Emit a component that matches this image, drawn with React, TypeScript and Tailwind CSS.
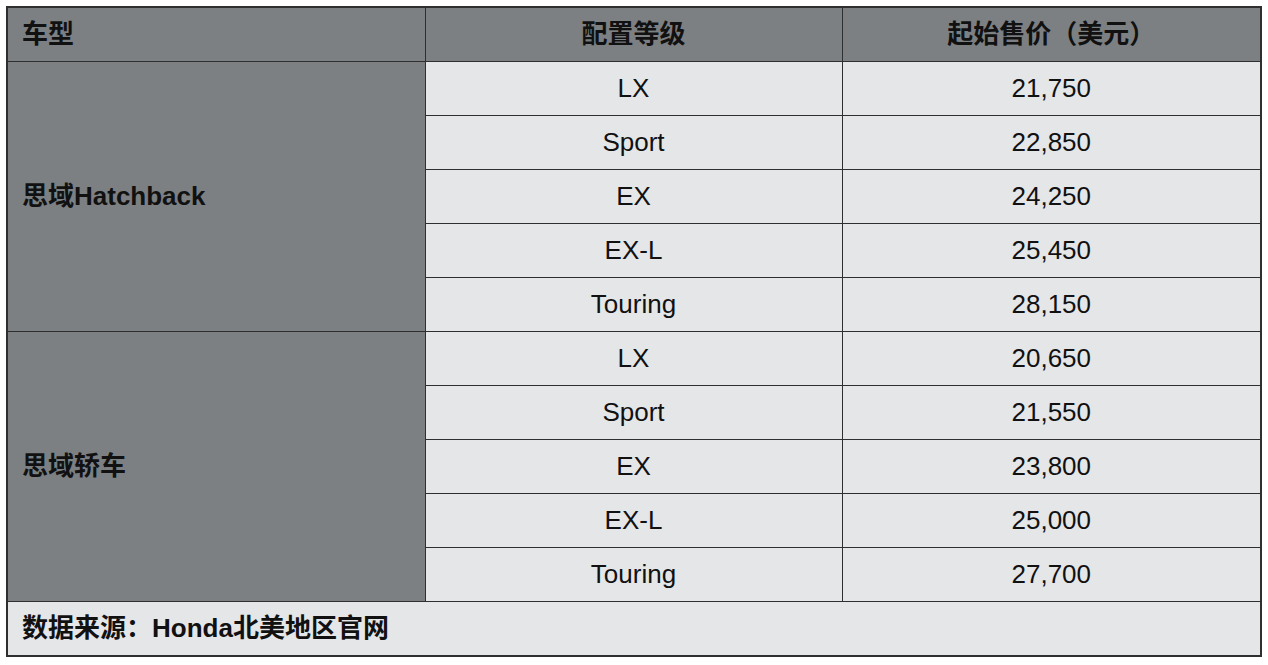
import React from 'react';

const GROUPS = [
    {
        name: '思域Hatchback',
        rows: [
            ['LX', '21,750'],
            ['Sport', '22,850'],
            ['EX', '24,250'],
            ['EX-L', '25,450'],
            ['Touring', '28,150'],
        ],
    },
    {
        name: '思域轿车',
        rows: [
            ['LX', '20,650'],
            ['Sport', '21,550'],
            ['EX', '23,800'],
            ['EX-L', '25,000'],
            ['Touring', '27,700'],
        ],
    },
];

export default function App() {
    return (
        <div className="bg-white w-[1268px] h-[665px] pt-[6px] pl-[6px] font-['Liberation_Sans','Noto_Sans_CJK_SC',sans-serif] text-[#111]">
            <table className="border-collapse border-2 border-[#2f2f2f] table-fixed w-[1254px] text-[26px] leading-none">
                <colgroup>
                    <col className="w-[418px]" />
                    <col className="w-[417px]" />
                    <col className="w-[419px]" />
                </colgroup>
                <thead>
                    <tr className="h-[54px] bg-[#7d8083]">
                        <th className="border border-[#2f2f2f] text-left pl-[14px] font-bold">车型</th>
                        <th className="border border-[#2f2f2f] text-center font-bold">配置等级</th>
                        <th className="border border-[#2f2f2f] text-center font-bold">起始售价（美元）</th>
                    </tr>
                </thead>
                <tbody>
                    {GROUPS.map((g) =>
                        g.rows.map((r, i) => (
                            <tr key={g.name + i} className="h-[54px]">
                                {i === 0 && (
                                    <td rowSpan={g.rows.length} className="border border-[#2f2f2f] bg-[#7d8083] pl-[14px] font-bold">
                                        {g.name}
                                    </td>
                                )}
                                <td className="border border-[#2f2f2f] bg-[#e5e6e8] text-center">{r[0]}</td>
                                <td className="border border-[#2f2f2f] bg-[#e5e6e8] text-center">{r[1]}</td>
                            </tr>
                        ))
                    )}
                    <tr className="h-[55px] bg-[#e5e6e8]">
                        <td colSpan={3} className="border border-[#2f2f2f] pl-[14px] font-bold">数据来源：Honda北美地区官网</td>
                    </tr>
                </tbody>
            </table>
        </div>
    );
}
